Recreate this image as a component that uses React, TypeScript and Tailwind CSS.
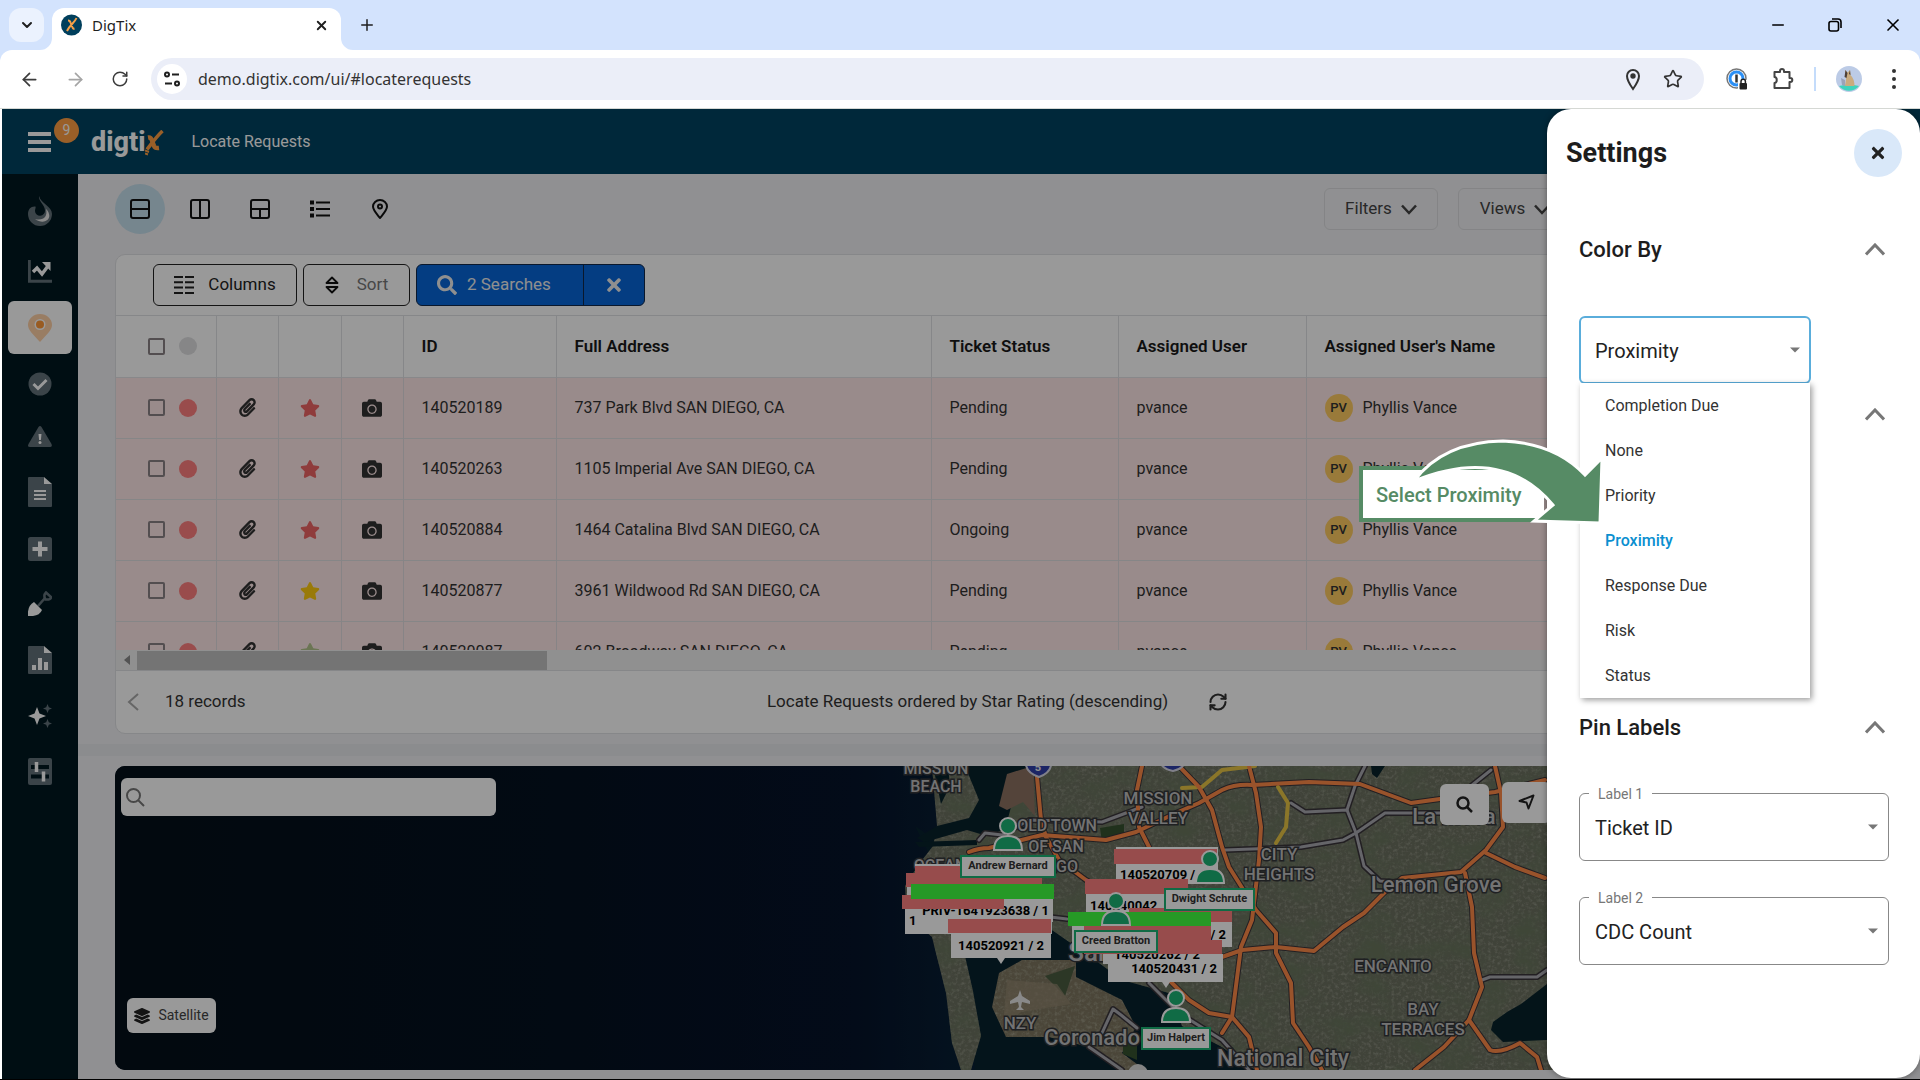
import React from "react";
import {
  FaCamera,
  FaLayerGroup,
  FaPaperclip,
  FaSearch,
  FaStar,
  FaTimes,
} from "react-icons/fa";
import {
  ArrowLeft,
  ArrowRight,
  ChevronDown,
  Minus,
  Plus,
  RefreshCw,
  RotateCw,
  Search,
  Star,
  X,
} from "lucide-react";

interface Ticket {
  id: string;
  address: string;
  status: string;
  star: string;
}

const tickets: Ticket[] = [
  { id: "140520189", address: "737 Park Blvd SAN DIEGO, CA", status: "Pending", star: "text-[#ee6565]" },
  { id: "140520263", address: "1105 Imperial Ave SAN DIEGO, CA", status: "Pending", star: "text-[#ee6565]" },
  { id: "140520884", address: "1464 Catalina Blvd SAN DIEGO, CA", status: "Ongoing", star: "text-[#ee6565]" },
  { id: "140520877", address: "3961 Wildwood Rd SAN DIEGO, CA", status: "Pending", star: "text-[#ffcb10]" },
  { id: "140520087", address: "602 Broadway SAN DIEGO, CA", status: "Pending", star: "text-[#b3c48a]" },
];

const colorOptions = [
  "Completion Due",
  "None",
  "Priority",
  "Proximity",
  "Response Due",
  "Risk",
  "Status",
];

const BrowserChrome = () => (
  <div className="shrink-0 bg-[#d3e3fd] font-['Noto_Sans',sans-serif] text-[#1f1f1f]">
    <div className="flex h-[50px] items-center pl-[9px]">
      <button aria-label="Search tabs" className="flex h-[34px] w-[35px] items-center justify-center rounded-xl bg-[#ebf2fe]">
        <ChevronDown size={16} strokeWidth={3} />
      </button>
      <div className="relative ml-2 h-[42px] w-[289px] self-end rounded-t-xl bg-white">
        <div className="flex h-[34px] items-center pr-2 pl-[9px]">
          <Favicon />
          <span className="ml-[10px] flex-1 text-[15px]">DigTix</span>
          <button aria-label="Close tab" className="p-1">
            <X size={15} strokeWidth={3} />
          </button>
        </div>
        <TabFoot className="absolute bottom-0 -left-3" />
        <TabFoot className="absolute -right-3 bottom-0 -scale-x-100" />
      </div>
      <button aria-label="New tab" className="ml-[17px]">
        <Plus size={18} strokeWidth={2} />
      </button>
      <div className="ml-auto flex items-center gap-[41px] pr-[17px] text-black">
        <button aria-label="Minimize">
          <Minus size={18} strokeWidth={2} />
        </button>
        <button aria-label="Restore">
          <svg width="14" height="14" viewBox="0 0 14 14" fill="none" stroke="currentColor" strokeWidth="1.6">
            <rect x="1" y="3.5" width="9.5" height="9.5" rx="2" />
            <path d="M4 1h6a3 3 0 0 1 3 3v6" />
          </svg>
        </button>
        <button aria-label="Close window">
          <X size={20} strokeWidth={2} />
        </button>
      </div>
    </div>
    <div className="flex h-[59px] items-center rounded-t-xl border-b border-[#d5d8d4] bg-white pr-[23px] pl-[19px]">
      <div className="flex items-center gap-[25px] text-[#3c3c3c]">
        <button aria-label="Back">
          <ArrowLeft size={21} strokeWidth={2} />
        </button>
        <button aria-label="Forward" className="text-[#a5a5a5]">
          <ArrowRight size={21} strokeWidth={2} />
        </button>
        <button aria-label="Reload">
          <RotateCw size={18} strokeWidth={2} />
        </button>
      </div>
      <div className="ml-[22px] flex h-[42px] flex-1 items-center rounded-full bg-[#ebeef8] pr-[21px] pl-[6px]">
        <span className="flex h-[30px] w-[30px] items-center justify-center rounded-full bg-white">
          <svg width="18" height="18" viewBox="0 0 18 18" fill="none" stroke="#1f1f1f" strokeWidth="2">
            <circle cx="4" cy="4.5" r="2" />
            <path d="M9 4.5h7M2 13.5h7" />
            <circle cx="14" cy="13.5" r="2" />
          </svg>
        </span>
        <input
          aria-label="Address"
          readOnly
          value="demo.digtix.com/ui/#locaterequests"
          className="ml-[11px] flex-1 bg-transparent text-[16px] text-[#333] outline-none"
        />
        <svg width="16" height="24" viewBox="0 0 16 24" fill="none" stroke="#333" strokeWidth="2">
          <path d="M8 22C3 15 2 12 2 9a6 6 0 0 1 12 0c0 3-1 6-6 13Z" />
          <circle cx="8" cy="9" r="1.7" fill="#333" />
        </svg>
        <Star size={20} strokeWidth={2} color="#333" className="ml-[22px]" />
      </div>
      <div className="flex items-center pl-[22px]">
        <svg width="22" height="22" viewBox="0 0 22 22" fill="none">
          <circle cx="10.5" cy="10.5" r="9.5" stroke="#777" strokeWidth="1.5" />
          <circle cx="10.5" cy="10.5" r="6.5" stroke="#2b8ff5" strokeWidth="3" />
          <path d="M10.5 6.5v8" stroke="#333" strokeWidth="2.5" />
          <path d="M12 12h10v10H12z" fill="#fff" />
          <rect x="13.5" y="15" width="7.5" height="6.5" rx="1" fill="#222" />
          <path d="M15 15v-1.500a2.200 2.200 0 0 1 4.400 0V15" stroke="#222" strokeWidth="1.5" />
        </svg>
        <svg width="22" height="24" viewBox="0 0 22 24" className="ml-6" fill="none" stroke="#444" strokeWidth="2" strokeLinejoin="round">
          <path d="M2.500 5H8V4a2 2 0 0 1 4 0v1h5.500v6h.8a2 2 0 0 1 0 4h-.8v6h-15v-5c3-.3 3-5.700 0-6Z" />
        </svg>
        <span className="ml-5 h-6 w-[2px] bg-[#c4dcfb]" />
        <svg width="26" height="26" viewBox="0 0 26 26" className="ml-5">
          <circle cx="13" cy="13" r="13" fill="#bccbe6" />
          <path d="M3 20a13 13 0 0 0 20 0q-10-3-20 0Z" fill="#3fd3bd" />
          <path d="M10 10l-1-6 2.500 2.500L14 4l.5 5q4 4 4 11H9l1-7Z" fill="#c9ab7e" />
          <path d="M9.500 4l2 3-1 5-2-1ZM14 4l-1 4 1.500 1Z" fill="#4d4038" />
          <path d="M5 12l4 2v6l-3-1Z" fill="#9aa3ba" />
        </svg>
        <svg width="6" height="22" viewBox="0 0 6 22" className="ml-[29px]" fill="#333">
          <circle cx="3" cy="3" r="2" />
          <circle cx="3" cy="11" r="2" />
          <circle cx="3" cy="19" r="2" />
        </svg>
      </div>
    </div>
  </div>
);

const TabFoot = ({ className }: { className: string }) => (
  <svg width="12" height="12" viewBox="0 0 12 12" className={className}>
    <path d="M12 0v12H0A12 12 0 0 0 12 0Z" fill="#fff" />
  </svg>
);

const Favicon = () => (
  <svg width="21" height="24" viewBox="0 0 21 24">
    <circle cx="10.500" cy="12" r="10.500" fill="#003f5c" />
    <path d="M7 7.500q2 0 2.500 2l2 5q.5 1.500 2 1M15.500 5c-2 5-6.500 6.500-9.500 13" stroke="#f5a048" strokeWidth="2" fill="none" />
  </svg>
);

const AppHeader = () => (
  <header className="flex h-[65px] shrink-0 items-center bg-[#004361] pl-[26px] text-white">
    <button aria-label="Menu" className="relative flex w-[23px] flex-col gap-[4px]">
      <span className="h-1 bg-white" />
      <span className="h-1 bg-white" />
      <span className="h-1 bg-white" />
      <span className="absolute -top-[14px] left-[26px] flex h-[25px] w-[25px] items-center justify-center rounded-full bg-[#ff9f43] text-[14px] leading-none">
        9
      </span>
    </button>
    <div className="ml-10 flex items-center">
      <span className="text-[27px] leading-8 font-extrabold">digti</span>
      <svg width="19" height="26" viewBox="0 0 19 26" fill="none" stroke="#ff9f43" className="mt-[2px]">
        <path d="M3 7.500Q6 7 7 10.500l2 5.500q1 2.500 5 2" strokeWidth="4.500" />
        <path d="M17.500 1C12 6 7 13 2 19.500" strokeWidth="3.500" />
        <path d="M0 20.500l4 1.500M0 23.500l3 1" strokeWidth="2" />
      </svg>
    </div>
    <h1 className="ml-[27px] text-[16px]">Locate Requests</h1>
  </header>
);

// two-tone glyphs: muted body, bright accent
const mute = "#63727a";
const railIcons = [
  {
    label: "Hot tickets",
    icon: (
      <svg width="24" height="30" viewBox="0 0 24 30">
        <path d="M11 0C10 5 17 9 17 14.500a5 5 0 0 1-10 .5c0-2 1-3 .5-4.500C3 10 0 13 0 18a12 12 0 0 0 24 0C24 10 13 8 11 0Z" fill={mute} />
        <path d="M18 13c2 8-3 12-11 10 8 6 16 1 14-5-.4-2-1.500-4-3-5Z" fill="#e6e6e6" />
      </svg>
    ),
  },
  {
    label: "Charts",
    icon: (
      <svg width="24" height="23" viewBox="0 0 24 23" fill="none">
        <path d="M1.300 0v21.300H24" stroke={mute} strokeWidth="3" />
        <path d="M5 12l4-4 5 6 6-8" stroke="#fff" strokeWidth="3.500" />
        <path d="M14 2H22.500V11Z" fill="#fff" />
      </svg>
    ),
  },
  {
    label: "Locate requests",
    icon: (
      <svg width="24" height="28" viewBox="0 0 24 28">
        <path d="M12 28C5 20 0 16 0 11a12 11 0 0 1 24 0c0 5-5 9-12 17Z" fill="#ffd0a6" />
        <circle cx="12" cy="10.500" r="5.500" fill="#fff" />
        <circle cx="12" cy="10.500" r="4" fill="#ff9838" />
      </svg>
    ),
  },
  {
    label: "Completed",
    icon: (
      <svg width="24" height="24" viewBox="0 0 24 24" fill="none">
        <circle cx="12" cy="12" r="11.500" fill={mute} />
        <path d="M5.500 12l4.500 4.500 8.500-8.500" stroke="#fff" strokeWidth="3" />
      </svg>
    ),
  },
  {
    label: "Alerts",
    icon: (
      <svg width="24" height="21" viewBox="0 0 24 21">
        <path d="M10.500 1q1.500-2 3 0l10 17q1 3-1.500 3H2q-3 0-1.500-3Z" fill={mute} />
        <path d="M10.500 8h3l-.6 6h-1.800Z" fill="#fff" />
        <circle cx="12" cy="16.500" r="1.500" fill="#fff" />
      </svg>
    ),
  },
  {
    label: "Documents",
    icon: (
      <svg width="24" height="30" viewBox="0 0 24 30">
        <path d="M1 0h15v7h8v22q0 1-1 1H1q-1 0-1-1V1q0-1 1-1Z" fill={mute} />
        <path d="M16 0l8 7h-8Z" fill="#fff" />
        <path d="M6 14h12M6 18h12M6 22h12" stroke="#fff" strokeWidth="2" />
      </svg>
    ),
  },
  {
    label: "Add",
    icon: (
      <svg width="24" height="24" viewBox="0 0 24 24">
        <rect width="24" height="24" rx="2.500" fill={mute} />
        <path d="M12 4.500v15M4.500 12h15" stroke="#fff" strokeWidth="4" />
      </svg>
    ),
  },
  {
    label: "Excavation",
    icon: (
      <svg width="24" height="25" viewBox="0 0 24 25" fill="none">
        <path d="M10 15l7-8" stroke={mute} strokeWidth="2.500" />
        <path d="M18 1.500l5 4.500q0 3-5.500 2.500-2.500-4 .5-7Z" stroke={mute} strokeWidth="2.500" />
        <path d="M6 11l8 8q-3 7-14 6Q-1 15 6 11Z" fill="#fff" />
      </svg>
    ),
  },
  {
    label: "Reports",
    icon: (
      <svg width="24" height="28" viewBox="0 0 24 28">
        <path d="M1 0h15v7h8v20q0 1-1 1H1q-1 0-1-1V1q0-1 1-1Z" fill={mute} />
        <path d="M16 0l8 7h-8Z" fill="#fff" />
        <path d="M4 19h4v5H4zM10 12h4v12h-4zM16 16h4v8h-4z" fill="#fff" />
      </svg>
    ),
  },
  {
    label: "Assistant",
    icon: (
      <svg width="24" height="24" viewBox="0 0 24 24">
        <path d="M9 3l2.500 6.500L18 12l-6.500 2.500L9 21l-2.500-6.500L0 12l6.500-2.500Z" fill="#fff" />
        <path d="M19.500 0l1.300 3.200L24 4.500l-3.200 1.300L19.500 9l-1.300-3.200L15 4.500l3.200-1.300ZM19.500 15l1.300 3.200 3.200 1.300-3.200 1.300-1.300 3.200-1.300-3.200-3.200-1.300 3.200-1.300Z" fill={mute} />
      </svg>
    ),
  },
  {
    label: "Preferences",
    icon: (
      <svg width="24" height="27" viewBox="0 0 24 27">
        <rect width="24" height="27" rx="2" fill={mute} />
        <path d="M3 9h18M3 18.500h18" stroke="#001820" strokeWidth="4" />
        <path d="M8.500 4v10M15.500 13.500v10" stroke="#fff" strokeWidth="3.500" />
      </svg>
    ),
  },
];

const SideRail = () => (
  <nav className="flex w-[76px] shrink-0 flex-col items-center gap-[30px] bg-[#001820] pt-[22px]">
    {railIcons.map(({ label, icon }, i) => (
      <a
        key={label}
        href="#locaterequests"
        aria-label={label}
        className={
          i === 2
            ? "-my-3 flex h-[53px] w-16 items-center justify-center rounded-md bg-white"
            : "flex first:mb-1"
        }
      >
        {icon}
      </a>
    ))}
  </nav>
);

const DownMark = () => (
  <svg width="16" height="11" viewBox="0 0 16 11" fill="none" stroke="currentColor" strokeWidth="2.500">
    <path d="M1 1.500 8 9l7-7.500" />
  </svg>
);

const ViewBar = () => (
  <div className="flex h-[70px] shrink-0 items-center">
    <div className="flex items-center gap-[10px] text-[#111]">
      <button aria-label="Split rows" className="flex h-[50px] w-[50px] items-center justify-center rounded-full bg-[#c5dfed]">
        <svg width="20" height="20" viewBox="0 0 20 20" fill="none" stroke="currentColor" strokeWidth="2">
          <rect x="1" y="1" width="18" height="18" rx="2" />
          <path d="M1 10h18" />
        </svg>
      </button>
      <button aria-label="Split columns" className="flex h-[50px] w-[50px] items-center justify-center">
        <svg width="20" height="20" viewBox="0 0 20 20" fill="none" stroke="currentColor" strokeWidth="2">
          <rect x="1" y="1" width="18" height="18" rx="2" />
          <path d="M10 1v18" />
        </svg>
      </button>
      <button aria-label="Grid" className="flex h-[50px] w-[50px] items-center justify-center">
        <svg width="20" height="20" viewBox="0 0 20 20" fill="none" stroke="currentColor" strokeWidth="2">
          <rect x="1" y="1" width="18" height="18" rx="2" />
          <path d="M1 10h18M10 10v9" />
        </svg>
      </button>
      <button aria-label="List" className="flex h-[50px] w-[50px] items-center justify-center">
        <svg width="20" height="18" viewBox="0 0 20 18" fill="none" stroke="currentColor" strokeWidth="2">
          <path d="M6 2.500h14M6 9h14M6 15.500h14" />
          <path d="M0 2.500h4M0 9h4M0 15.500h4" strokeWidth="4" />
        </svg>
      </button>
      <button aria-label="Map" className="flex h-[50px] w-[50px] items-center justify-center">
        <svg width="16" height="20" viewBox="0 0 16 20" fill="none" stroke="currentColor" strokeWidth="2">
          <path d="M8 19C4 14 1 11 1 7.500a7 6.500 0 0 1 14 0C15 11 12 14 8 19Z" />
          <circle cx="8" cy="7.500" r="2" />
        </svg>
      </button>
    </div>
    <div className="mr-[308px] ml-auto flex gap-5 text-[17px] text-[#444]">
      <button className="flex h-[42px] w-[114px] items-center justify-center gap-[9px] rounded-md border border-[#dcdde0]">
        Filters <DownMark />
      </button>
      <button className="flex h-[42px] w-[114px] items-center justify-center gap-[9px] rounded-md border border-[#dcdde0]">
        Views <DownMark />
      </button>
    </div>
  </div>
);

const TableToolbar = () => (
  <div className="flex h-[61px] items-center gap-[6px] border-b border-[#dfe1e4] pl-[37px] text-[17px]">
    <button className="flex h-[42px] w-[144px] items-center justify-center gap-[14px] rounded-md border border-[#222] text-[#222]">
      <svg width="20" height="18" viewBox="0 0 20 18" stroke="currentColor" strokeWidth="2">
        <path d="M0 1h9M11 1h9M0 6.300h9M11 6.300h9M0 11.600h9M11 11.600h9M0 17h9M11 17h9" />
      </svg>
      Columns
    </button>
    <button className="flex h-[42px] w-[107px] items-center justify-center gap-[18px] rounded-md border border-[#222] text-[#777]">
      <svg width="14" height="18" viewBox="0 0 14 18" fill="none" stroke="#111" strokeWidth="1.800" strokeLinejoin="round">
        <path d="M1.500 7 7 1.500 12.500 7ZM1.500 11 7 16.500 12.500 11Z" />
      </svg>
      Sort
    </button>
    <div className="flex h-[42px] rounded-md border border-[#12284a] bg-[#0867d9] text-[#eee]">
      <button className="flex w-[166px] items-center gap-[10px] pl-5">
        <FaSearch size={20} />
        2 Searches
      </button>
      <button aria-label="Clear searches" className="flex w-[61px] items-center justify-center border-l border-[#12284a]">
        <FaTimes size={20} />
      </button>
    </div>
  </div>
);

const TicketTable = () => (
  <table className="w-full table-fixed border-collapse text-left text-[16px] text-[#333]">
    <colgroup>
      <col className="w-[100px]" />
      <col className="w-[62px]" />
      <col className="w-[63px]" />
      <col className="w-[62px]" />
      <col className="w-[153px]" />
      <col className="w-[375px]" />
      <col className="w-[187px]" />
      <col className="w-[188px]" />
      <col />
    </colgroup>
    <thead>
      <tr className="h-[61px] border-b border-[#e3e3e6] text-[17px] text-[#1a1a1a]">
        <th className="border-r border-[#dfe1e4]">
          <div className="flex items-center gap-[14px] pl-8">
            <RowCheckbox label="Select all" />
            <span className="h-[18px] w-[18px] rounded-full bg-[#dfe0e2]" />
          </div>
        </th>
        <th className="border-r border-[#dfe1e4]" />
        <th className="border-r border-[#dfe1e4]" />
        <th className="border-r border-[#dfe1e4]" />
        <th className="border-r border-[#dfe1e4] pl-[18px] font-semibold">ID</th>
        <th className="border-r border-[#dfe1e4] pl-[18px] font-semibold">Full Address</th>
        <th className="border-r border-[#dfe1e4] pl-[18px] font-semibold">Ticket Status</th>
        <th className="border-r border-[#dfe1e4] pl-[18px] font-semibold">Assigned User</th>
        <th className="pl-[18px] font-semibold">Assigned User's Name</th>
      </tr>
    </thead>
    <tbody>
      {tickets.map((ticket) => (
        <TicketRow key={ticket.id} ticket={ticket} />
      ))}
    </tbody>
  </table>
);

const RowCheckbox = ({ label }: { label: string }) => (
  <input
    type="checkbox"
    aria-label={label}
    className="h-[17px] w-[17px] appearance-none rounded-xs border-2 border-[#8a8285]"
  />
);

const TicketRow = ({ ticket }: { ticket: Ticket }) => {
  const { id, address, status, star } = ticket;

  return (
    <tr className="h-[61px] border-b border-[#dfdfe2] bg-[#ffe8e8]">
      <td className="border-r border-[#e2dcdf]">
        <div className="flex items-center gap-[14px] pl-8">
          <RowCheckbox label={`Select ${id}`} />
          <span className="h-[18px] w-[18px] rounded-full bg-[#ff7f7f]" />
        </div>
      </td>
      <td className="border-r border-[#e2dcdf]">
        <FaPaperclip size={19} className="mx-auto" />
      </td>
      <td className="border-r border-[#e2dcdf]">
        <FaStar size={20} className={`mx-auto ${star}`} />
      </td>
      <td className="border-r border-[#e2dcdf]">
        <FaCamera size={20} className="mx-auto" />
      </td>
      <td className="border-r border-[#e2dcdf] pl-[18px]">{id}</td>
      <td className="border-r border-[#e2dcdf] pl-[18px]">{address}</td>
      <td className="border-r border-[#e2dcdf] pl-[18px]">{status}</td>
      <td className="border-r border-[#e2dcdf] pl-[18px]">pvance</td>
      <td className="pl-[18px]">
        <div className="flex items-center gap-[10px]">
          <span className="flex h-[28px] w-[28px] items-center justify-center rounded-full bg-[#ffcb62] text-[13px] font-medium">
            PV
          </span>
          Phyllis Vance
        </div>
      </td>
    </tr>
  );
};

const TicketCard = () => (
  <section className="shrink-0 overflow-hidden rounded-[10px] border border-[#e0e1e4] bg-white">
    <TableToolbar />
    <div className="h-[334px] overflow-hidden">
      <TicketTable />
    </div>
    <div className="flex h-[21px] items-center border-b border-[#dfe1e4] bg-[#f1f1f1]">
      <span className="ml-2 h-0 w-0 border-y-[5px] border-r-[6px] border-y-transparent border-r-[#8a8a8a]" />
      <span className="ml-[7px] h-[19px] w-[410px] bg-[#c1c1c1]" />
    </div>
    <div className="grid h-[62px] grid-cols-[1fr_auto_1fr] items-center text-[17px] text-[#333]">
      <div className="flex items-center gap-[26px] pl-[11px]">
        <button aria-label="Previous page" className="text-[#aaa]">
          <svg width="12" height="18" viewBox="0 0 12 18" fill="none" stroke="currentColor" strokeWidth="2">
            <path d="M11 1 2 9l9 8" />
          </svg>
        </button>
        18 records
      </div>
      <div className="flex items-center gap-10">
        Locate Requests ordered by Star Rating (descending)
        <button aria-label="Refresh">
          <RefreshCw size={20} strokeWidth={2.5} />
        </button>
      </div>
    </div>
  </section>
);

const orangeRoads = [
  "M921 0L926 54L931 71L944 94L971 114L1000 130",
  "M854 86Q864 82 874 82L927 69L991 74L1021 66L1061 47L1084 37L1107 24Q1120 18 1137 19L1194 16L1245 18L1296 37L1325 33L1380 26L1430 14",
  "M1064 0L1084 21L1097 44L1107 81L1114 101L1141 144L1161 167L1161 187L1176 217L1178 257L1194 281L1207 304",
  "M1134 0L1141 27L1146 61L1144 94L1137 154L1126 181L1117 251L1107 267",
  "M1027 0L1022 24L1024 61L1037 87",
  "M1054 214L1074 234L1094 247L1117 251L1134 271L1142 304",
  "M1090 197L1107 191L1127 184L1161 181L1199 185L1228 161L1249 147L1270 126L1287 112L1346 106L1371 84L1388 61L1386 27L1380 0",
  "M1350 107L1357 141L1359 187L1367 221L1354 254L1329 281L1300 304",
  "M1354 254L1375 284Q1385 288 1405 277L1422 291L1426 304",
  "M1371 87L1400 101L1430 112",
];

const greyRoads = [
  "M864 74L870 67L887 69L914 54L987 56L1027 41",
  "M1110 84L1186 81L1228 74L1241 67L1270 47L1330 47",
  "M1176 37L1190 46L1232 44L1241 67L1249 100L1265 115L1310 118",
  "M1250 0L1240 20L1232 44",
  "M1367 214L1375 211L1422 211L1432 204",
  "M1356 20L1376 4",
  "M987 267L998 243L1006 249L1022 262",
  "M974 281L1007 304",
  "M1034 217L1064 247L1107 274L1134 304",
  "M927 150L952 153",
];

const mapLabels = [
  { x: 821, y: 8, size: 16, text: "MISSION" },
  { x: 821, y: 26, size: 16, text: "BEACH" },
  { x: 942, y: 65, size: 16, text: "OLD TOWN" },
  { x: 941, y: 86, size: 16, text: "OF SAN" },
  { x: 940, y: 106, size: 16, text: "DIEGO" },
  { x: 825, y: 105, size: 16, text: "OCEAN" },
  { x: 1043, y: 38, size: 17, text: "MISSION" },
  { x: 1043, y: 58, size: 17, text: "VALLEY" },
  { x: 1164, y: 94, size: 17, text: "CITY" },
  { x: 1164, y: 114, size: 17, text: "HEIGHTS" },
  { x: 1339, y: 58, size: 22, text: "La Mesa" },
  { x: 1321, y: 126, size: 22, text: "Lemon Grove" },
  { x: 1278, y: 206, size: 17, text: "ENCANTO" },
  { x: 1308, y: 249, size: 17, text: "BAY" },
  { x: 1308, y: 269, size: 17, text: "TERRACES" },
  { x: 977, y: 279, size: 22, text: "Coronado" },
  { x: 905, y: 263, size: 17, text: "NZY" },
  { x: 1168, y: 300, size: 23, text: "National City" },
  { x: 1012, y: 195, size: 26, text: "San Diego" },
];

const SatelliteMap = () => (
  <svg
    className="absolute inset-0 h-full w-full"
    viewBox="0 0 1766 304"
    preserveAspectRatio="xMinYMin slice"
  >
    <defs>
      <linearGradient id="sea" x1="0" x2="1">
        <stop offset="0" stopColor="#040f19" />
        <stop offset=".25" stopColor="#041120" />
        <stop offset=".42" stopColor="#05132a" />
        <stop offset=".48" stopColor="#081f34" />
      </linearGradient>
      <filter id="terrain" x="0" y="0" width="100%" height="100%">
        <feTurbulence type="fractalNoise" baseFrequency=".025 .04" numOctaves="5" seed="8" />
        <feColorMatrix values="0 0 0 0 .14  0 0 0 0 .18  0 0 0 0 .11  2.400 0 0 0 -1" />
        <feComposite in2="SourceGraphic" operator="in" />
      </filter>
      <filter id="streets" x="0" y="0" width="100%" height="100%">
        <feTurbulence type="fractalNoise" baseFrequency=".3" numOctaves="3" seed="3" />
        <feColorMatrix values="0 0 0 0 .72  0 0 0 0 .74  0 0 0 0 .64  0 2 0 0 -.9" />
        <feComposite in2="SourceGraphic" operator="in" />
      </filter>
      <path id="mainland" d="M817 0L822 60L818 80L804 98L790 120L792 150L817 171L831 227L837 277L846 304L856 304L866 270L858 225L850 190L854 167L870 160L937 164L980 194L1007 214L1054 227L1067 260L1107 281L1140 304L1766 304L1766 0Z" />
      <path id="island" d="M884 207L907 194L961 194L961 211L1007 234L1021 261L1007 287L1030 304L1005 304L974 281L934 271L891 271L877 241Z" />
    </defs>
    <rect width="1766" height="304" fill="url(#sea)" />
    <path d="M800 60Q850 150 860 304L1140 304L1060 220L930 150Z" fill="#08222e" />
    <g fill="#6c7060">
      <use href="#mainland" />
      <use href="#island" fill="#7d7660" />
    </g>
    <g filter="url(#streets)" opacity=".35">
      <use href="#mainland" />
      <use href="#island" />
    </g>
    <g filter="url(#terrain)">
      <use href="#mainland" />
    </g>
    <g fill="#08222b">
      <path d="M818 0h15l2 20-9 18ZM850 0h66l-2 18-14 8-8 30 20 6-24 2-16 6-20-6-42 12-8-4 20-12 32-8 10-18Z" />
      <path d="M800 76l62-2v5l-58 2ZM1256 0h14l-8 12-5-4Z" />
      <path d="M1378 256l14-10 14-8 26-20v56l-44 2-12-12Z" />
    </g>
    <path d="M892 8l26-8 2 50-12-14-16 8-8-4Z" fill="#8c7261" />
    <path d="M985 62l24-4v14l-22 4ZM1008 278l14-10v26l-14-6Z" fill="#36522f" />
    <path d="M930 210l30-10-10 30Z" fill="#4a5c40" />
    <path d="M892 214l50 4 14 20-50 8-18 14Z" fill="#948871" opacity=".7" />
    <g fill="none" strokeLinejoin="round" strokeLinecap="round">
      <g stroke="#39343a" strokeWidth="6">
        {[...greyRoads, ...orangeRoads].map((d) => (
          <path key={d} d={d} />
        ))}
      </g>
      <g stroke="#a9a9b0" strokeWidth="3">
        {greyRoads.map((d) => (
          <path key={d} d={d} />
        ))}
      </g>
      <g stroke="#e8c545" strokeWidth="4">
        <path d="M1163 21L1173 37L1171 61L1161 77" />
        <path d="M1067 22L1087 21L1107 4L1140 0" />
      </g>
      <g stroke="#ff8a48" strokeWidth="4">
        {orangeRoads.map((d) => (
          <path key={d} d={d} />
        ))}
      </g>
    </g>
    <g fill="#2f3fa8" stroke="#d5d5e5" strokeWidth="2">
      <path d="M911-6h25q2 12-12 17-15-5-13-17Z" />
      <path d="M1045-10h25q2 12-12 15-15-3-13-15Z" />
    </g>
    <text x="923" y="5" textAnchor="middle" fontSize="11" fontWeight="700" fill="#eee">
      5
    </text>
    <path d="M905 224l2 6 8 5v3l-8-2-1 5 3 3h-8l3-3-1-5-8 2v-3l8-5Z" fill="#e5e5e5" />
    <circle cx="1023" cy="308" r="10" fill="#ddd" />
    <g
      fill="#c0c0c0"
      stroke="#34363a"
      strokeWidth="3"
      paintOrder="stroke"
      textAnchor="middle"
      fontWeight="500"
    >
      {mapLabels.map(({ x, y, size, text }) => (
        <text key={text + x} x={x} y={y} fontSize={size}>
          {text}
        </text>
      ))}
    </g>
  </svg>
);

// stacked in drawing order, later entries cover earlier ones
const ticketPins = [
  { box: "left-[800px] top-[98px] w-[127px] h-[22px] bg-white" },
  { box: "left-[800px] top-[100px] w-[127px] h-[18px] bg-[#fc7f7f]" },
  { box: "left-[792px] top-[118px] w-[145px] h-[16px] bg-white" },
  { box: "left-[791px] top-[107px] w-[136px] h-[14px] bg-[#fc7f7f]" },
  { box: "left-[790px] top-[141px] w-[147px] h-[27px] bg-white", text: "1", align: "justify-start pl-1 items-center" },
  { box: "left-[803px] top-[132px] w-[135px] h-[24px] bg-white", text: "PRIV-1641923638 / 1", align: "justify-center items-center" },
  { box: "left-[787px] top-[129px] w-[102px] h-[14px] bg-[#fc7f7f]" },
  { box: "left-[796px] top-[118px] w-[143px] h-[15px] bg-[#40ff40]" },
  { box: "left-[833px] top-[153px] w-[103px] h-[14px] bg-[#fc7f7f]" },
  { box: "left-[836px] top-[167px] w-[100px] h-[25px] bg-white", text: "140520921 / 2", align: "justify-center items-center", tip: true },
  { box: "left-[1001px] top-[81px] w-[102px] h-[32px] bg-white" },
  { box: "left-[999px] top-[83px] w-[103px] h-[15px] bg-[#fc7f7f]" },
  { box: "left-[1001px] top-[98px] w-[101px] h-[20px] bg-white", text: "140520709 /", align: "justify-start pl-1 items-center" },
  { box: "left-[971px] top-[128px] w-[100px] h-[22px] bg-white", text: "140240042", align: "justify-start pl-1 items-center" },
  { box: "left-[970px] top-[113px] w-[103px] h-[15px] bg-[#fc7f7f]" },
  { box: "left-[1076px] top-[156px] w-[41px] h-[25px] bg-white", text: "/ 2", align: "justify-end pr-[6px] items-center" },
  { box: "left-[1014px] top-[142px] w-[103px] h-[14px] bg-[#fc7f7f]" },
  { box: "left-[957px] top-[159px] w-[60px] h-[26px] bg-white" },
  { box: "left-[993px] top-[188px] w-[115px] h-[28px] bg-white", text: "140520431 / 2", align: "justify-end pr-[6px] items-center", tip: true },
  { box: "left-[988px] top-[178px] w-[108px] h-[20px] bg-white", text: "140520262 / 2", align: "justify-center items-center" },
  { box: "left-[969px] top-[160px] w-[127px] h-[28px] bg-[#fc7f7f]" },
  { box: "left-[992px] top-[174px] w-[115px] h-[14px] bg-[#fc7f7f]" },
  { box: "left-[953px] top-[146px] w-[143px] h-[14px] bg-[#40ff40]" },
];

const people = [
  { name: "Andrew Bernard", place: "left-[845px] top-[51px] w-[96px]" },
  { name: "Dwight Schrute", place: "left-[1049px] top-[84px] w-[91px]" },
  { name: "Creed Bratton", place: "left-[959px] top-[126px] w-[84px]" },
  { name: "Jim Halpert", place: "left-[1026px] top-[223px] w-[70px]" },
];

const MapView = () => (
  <section className="relative min-h-[304px] flex-1 overflow-hidden rounded-[10px] bg-[#04111f]">
    <SatelliteMap />
    {ticketPins.map(({ box, text, align, tip }) => (
      <div
        key={box}
        className={`absolute flex ${box} ${align ?? ""} text-[13px] leading-none font-bold whitespace-nowrap text-black`}
      >
        {text}
        {tip && (
          <span className="absolute top-full left-1/2 h-0 w-0 -translate-x-1/2 border-x-[4px] border-t-[6px] border-x-transparent border-t-white" />
        )}
      </div>
    ))}
    {people.map(({ name, place }) => (
      <div key={name} className={`absolute flex flex-col items-center gap-1 ${place}`}>
        <svg width="30" height="34" viewBox="0 0 30 34" fill="#1cb274" stroke="#fff" strokeWidth="2">
          <circle cx="15" cy="9" r="8" />
          <path d="M1 33q0-14 14-14t14 14Z" />
        </svg>
        <span className="flex h-[23px] w-full items-center justify-center border-2 border-[#1cb274] bg-white text-[11px] font-bold whitespace-nowrap text-[#333]">
          {name}
        </span>
      </div>
    ))}
    <label className="absolute top-[12px] left-[6px] flex h-[38px] w-[375px] items-center rounded-md bg-white pl-[5px] text-[#777]">
      <svg width="19" height="19" viewBox="0 0 19 19" fill="none" stroke="currentColor" strokeWidth="2">
        <circle cx="7.500" cy="7.500" r="6.500" />
        <path d="M12 12l6 6" />
      </svg>
      <input aria-label="Search map" className="ml-2 flex-1 bg-transparent outline-none" />
    </label>
    <button className="absolute bottom-[37px] left-[12px] flex h-[35px] w-[89px] items-center justify-center gap-2 rounded-md bg-white text-[14px] text-[#444]">
      <FaLayerGroup size={16} className="text-[#222]" />
      Satellite
    </button>
    <button aria-label="Search this area" className="absolute top-[18px] left-[1325px] flex h-[41px] w-[49px] items-center justify-center rounded-md bg-white text-[#222]">
      <svg width="17" height="17" viewBox="0 0 17 17" fill="none" stroke="currentColor" strokeWidth="2.5">
        <circle cx="7" cy="7" r="5.500" />
        <path d="M11 11l5 5" />
      </svg>
    </button>
    <button aria-label="My location" className="absolute top-[16px] left-[1387px] flex h-[41px] w-[49px] items-center justify-center rounded-md bg-white text-[#222]">
      <svg width="17" height="17" viewBox="0 0 17 17" fill="none" stroke="currentColor" strokeWidth="2" strokeLinejoin="round">
        <path d="M15.500 1.500 10.500 14.500 8.500 8.500 1.500 7Z" />
      </svg>
    </button>
  </section>
);

const SectionTitle = ({ children }: { children?: React.ReactNode }) => (
  <div className="flex h-8 items-center justify-between pr-1">
    <h3 className="text-[22px] font-medium text-[#1d1d1d]">{children}</h3>
    <button aria-label="Toggle section" className="text-[#777]">
      <svg width="20" height="13" viewBox="0 0 20 13" fill="none" stroke="currentColor" strokeWidth="3">
        <path d="M1 11.500 10 2l9 9.500" />
      </svg>
    </button>
  </div>
);

const Caret = () => (
  <span className="pointer-events-none absolute top-1/2 right-[11px] h-0 w-0 -translate-y-1/2 border-x-[5px] border-t-[5px] border-x-transparent border-t-[#777]" />
);

interface SelectFieldProps {
  id: string;
  label: string;
  value: string;
  options: string[];
}

const SelectField = ({ id, label, value, options }: SelectFieldProps) => (
  <div className="relative">
    <label htmlFor={id} className="absolute -top-[9px] left-[10px] bg-white px-[9px] text-[14px] leading-5 text-[#777]">
      {label}
    </label>
    <select
      id={id}
      defaultValue={value}
      className="block h-[68px] w-full appearance-none rounded-md border border-[#888] bg-white px-[15px] pt-[2px] text-[20px] text-[#222] outline-none"
    >
      {options.map((option) => (
        <option key={option}>{option}</option>
      ))}
    </select>
    <Caret />
  </div>
);

const Callout = () => (
  <div className="absolute top-[330px] -left-[188px] z-20">
    <div className="mt-[27px] flex h-[56px] w-[185px] items-center border-4 border-r-0 border-[#568b65] bg-white pt-[2px] pl-[13px] text-[20px] font-medium whitespace-nowrap text-[#568b65]">
      Select Proximity
    </div>
    <svg width="250" height="100" viewBox="0 0 250 100" className="absolute top-0 left-0">
      <path
        d="M55 42Q84 3 144 2Q196 4 226 36L243 19L241 84L175 82L194 66Q144 6 55 42Z"
        fill="#568b65"
        stroke="#fff"
        strokeWidth="3"
      />
    </svg>
  </div>
);

const SettingsPanel = () => (
  <aside className="absolute top-0 right-0 bottom-px w-[373px] rounded-[24px] bg-white shadow-[0_0_6px_rgba(0,0,0,0.4)]">
    <div className="flex items-center justify-between pt-5 pr-[18px] pl-[19px]">
      <h2 className="text-[27px] font-bold text-[#1d1d1d]">Settings</h2>
      <button aria-label="Close settings" className="flex h-12 w-12 items-center justify-center rounded-full bg-[#d9e8f9] text-[#222]">
        <FaTimes size={18} />
      </button>
    </div>
    <div className="pr-[31px] pl-8">
      <div className="mt-14">
        <SectionTitle>Color By</SectionTitle>
      </div>
      <div className="relative mt-[51px] w-[232px]">
        <select
          aria-label="Color By"
          defaultValue="Proximity"
          className="block h-[68px] w-full appearance-none rounded-md border-2 border-[#5aaddb] bg-white px-[14px] pt-[2px] text-[20px] text-[#222] outline-none"
        >
          {colorOptions.map((option) => (
            <option key={option}>{option}</option>
          ))}
        </select>
        <Caret />
        <ul className="absolute top-[67px] left-[1px] z-10 w-[230px] bg-white shadow-[2px_2px_6px_rgba(0,0,0,0.4)]">
          {colorOptions.map((option) => (
            <li key={option}>
              <button
                className={
                  option === "Proximity"
                    ? "flex h-[45px] w-full items-center pl-[25px] text-[16px] font-medium text-[#0a8fd0]"
                    : "flex h-[45px] w-full items-center pl-[25px] text-[16px] text-[#333]"
                }
              >
                {option}
              </button>
            </li>
          ))}
        </ul>
      </div>
      <div className="mt-[14px]">
        <SectionTitle />
      </div>
      <div className="mt-[281px]">
        <SectionTitle>Pin Labels</SectionTitle>
      </div>
      <div className="mt-[50px] flex flex-col gap-9">
        <SelectField id="label-1" label="Label 1" value="Ticket ID" options={["Ticket ID", "Status"]} />
        <SelectField id="label-2" label="Label 2" value="CDC Count" options={["CDC Count", "Priority"]} />
      </div>
    </div>
    <Callout />
  </aside>
);

const App = () => {
  return (
    <div className="flex min-h-screen flex-col bg-white font-[Roboto,sans-serif]">
      <BrowserChrome />
      <div className="relative flex flex-1 flex-col overflow-hidden border-b border-black pl-[2px]">
        <AppHeader />
        <div className="flex flex-1">
          <SideRail />
          <main className="flex min-w-0 flex-1 flex-col bg-[#f0f0f3] pr-10 pb-[9px] pl-[37px]">
            <ViewBar />
            <div className="pt-[10px]">
              <TicketCard />
            </div>
            <div className="-mr-10 -ml-[37px] mt-[10px] mb-[10px] h-[12px] shrink-0 bg-[#e8eaed]" />
            <MapView />
          </main>
        </div>
        <div className="absolute inset-0 left-[2px] bg-black/40" />
        <SettingsPanel />
      </div>
    </div>
  );
};

export default App;
